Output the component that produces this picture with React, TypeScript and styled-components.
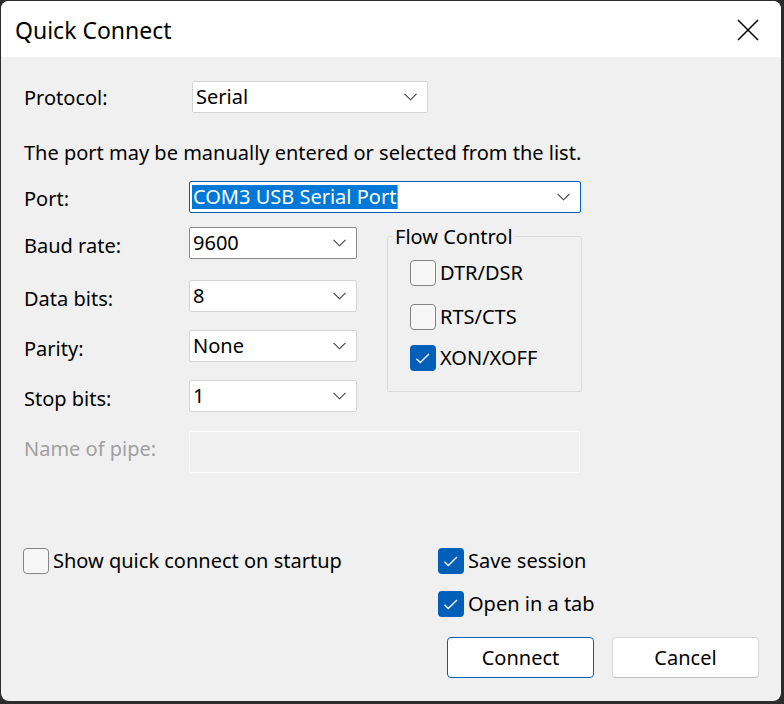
import React from "react";
import styled, { createGlobalStyle } from "styled-components";

const GlobalStyle = createGlobalStyle`
  html, body { margin: 0; padding: 0; background: #2c2c2c; }
  body {
    width: 784px; height: 704px; overflow: hidden;
    font-family: "Noto Sans", "Open Sans", sans-serif;
    color: #000;
  }
  * { box-sizing: border-box; }
`;

const Frame = styled.div`
  width: 784px;
  height: 704px;
  padding: 1px 3px 3px 1px;
  display: flex;
`;

const Window = styled.div`
  flex: 1;
  display: flex;
  flex-direction: column;
  background: #f0f0f0;
  border-radius: 8px;
  overflow: hidden;
`;

const TitleBar = styled.div`
  height: 56px;
  flex: none;
  background: #ffffff;
  display: flex;
  align-items: center;
  justify-content: space-between;
  padding: 1px 22px 0 14px;
`;

const Title = styled.div`
  font-size: 23px;
  line-height: 28px;
`;

const Body = styled.div`
  flex: 1;
  display: flex;
  flex-direction: column;
  padding: 0 22px 23px 22px;
`;

const Row = styled.div<{ $mt?: number }>`
  display: flex;
  align-items: center;
  margin-top: ${(p) => p.$mt ?? 0}px;
`;

const Label = styled.div<{ $w: number; $dy?: number; $disabled?: boolean }>`
  width: ${(p) => p.$w}px;
  flex: none;
  font-size: 20px;
  line-height: 28px;
  padding-left: 1px;
  position: relative;
  top: ${(p) => p.$dy ?? 0}px;
  color: ${(p) => (p.$disabled ? "#a0a0a0" : "#000")};
`;

const Combo = styled.div<{ $w: number; $border?: string }>`
  width: ${(p) => p.$w}px;
  height: 32px;
  flex: none;
  background: #ffffff;
  border: 1px solid ${(p) => p.$border ?? "#d4d4d4"};
  border-radius: 2px;
  display: flex;
  align-items: center;
  justify-content: space-between;
  padding: 0 10px 0 2px;
`;

const ComboText = styled.span<{ $selected?: boolean }>`
  font-size: 20px;
  line-height: 24px;
  padding: 0 1px;
  background: ${(p) => (p.$selected ? "#0078d7" : "transparent")};
  color: ${(p) => (p.$selected ? "#ffffff" : "#000")};
`;

const Caret = styled.span`
  width: 1px;
  height: 24px;
  background: #ff8000;
`;

const Spacer = styled.span`
  flex: 1;
`;

const Description = styled.div`
  margin-top: 26px;
  font-size: 20px;
  line-height: 28px;
  padding-left: 1px;
`;

const Middle = styled.div`
  display: flex;
  margin-top: 14px;
  gap: 30px;
`;

const LeftCol = styled.div`
  display: flex;
  flex-direction: column;
`;

const Group = styled.div`
  position: relative;
  width: 195px;
  height: 156px;
  margin-top: 9px;
  border: 1px solid #dcdcdc;
  border-radius: 2px;
  padding: 21px 0 0 22px;
  display: flex;
  flex-direction: column;
`;

const Legend = styled.span`
  position: absolute;
  top: -13px;
  left: 5px;
  padding: 0 2px;
  background: #f0f0f0;
  font-size: 20px;
  line-height: 26px;
`;

const PipeInput = styled.div`
  width: 391px;
  height: 42px;
  flex: none;
  border: 1px solid #fafafa;
  border-radius: 2px;
  background: #f0f0f0;
`;

const Bottom = styled.div`
  margin-top: auto;
  display: flex;
  flex-direction: column;
`;

const BottomChecks = styled.div`
  display: flex;
`;

const CheckCol = styled.div<{ $w?: number }>`
  width: ${(p) => (p.$w ? `${p.$w}px` : "auto")};
  display: flex;
  flex-direction: column;
  gap: 14px;
`;

const CheckItem = styled.div<{ $mt?: number }>`
  display: flex;
  align-items: center;
  gap: 4px;
  height: 29px;
  margin-top: ${(p) => p.$mt ?? 0}px;
`;

const Box = styled.div<{ $checked?: boolean }>`
  width: 26px;
  height: 26px;
  flex: none;
  border-radius: 4px;
  background: ${(p) => (p.$checked ? "#005fb8" : "#f6f6f6")};
  border: ${(p) => (p.$checked ? "none" : "1px solid #858585")};
  display: flex;
  align-items: center;
  justify-content: center;
`;

const CheckText = styled.span`
  font-size: 20px;
  line-height: 28px;
  padding-top: 1px;
`;

const ButtonRow = styled.div`
  display: flex;
  justify-content: flex-end;
  gap: 18px;
  margin-top: 19px;
`;

const Button = styled.button<{ $primary?: boolean }>`
  width: 147px;
  height: 41px;
  background: #ffffff;
  border: 1px solid ${(p) => (p.$primary ? "#005fb8" : "#d6d6d6")};
  border-bottom-color: ${(p) => (p.$primary ? "#005fb8" : "#c2c2c2")};
  border-radius: 4px;
  font-family: inherit;
  font-size: 20px;
  color: #000;
  padding: 0;
`;

const Chevron = () => (
  <svg width="13" height="8" viewBox="0 0 13 8">
    <path d="M0.5 0.8 L6.5 6.8 L12.5 0.8" fill="none" stroke="#404040" strokeWidth="1.1" />
  </svg>
);

const CloseIcon = () => (
  <svg width="22" height="22" viewBox="0 0 22 22">
    <path d="M1 1 L21 21 M21 1 L1 21" fill="none" stroke="#000" strokeWidth="1.5" />
  </svg>
);

const Tick = () => (
  <svg width="26" height="26" viewBox="0 0 26 26">
    <path d="M6.5 13.8 L10.3 17.6 L19 9" fill="none" stroke="#fff" strokeWidth="1.4" />
  </svg>
);

const Check = ({ checked, label, mt }: { checked?: boolean; label: string; mt?: number }) => (
  <CheckItem $mt={mt}>
    <Box $checked={checked}>{checked && <Tick />}</Box>
    <CheckText>{label}</CheckText>
  </CheckItem>
);

const Select = ({ w, value, border }: { w: number; value: string; border?: string }) => (
  <Combo $w={w} $border={border}>
    <ComboText>{value}</ComboText>
    <Chevron />
  </Combo>
);

export default function App() {
  return (
    <>
      <GlobalStyle />
      <Frame>
        <Window>
          <TitleBar>
            <Title>Quick Connect</Title>
            <CloseIcon />
          </TitleBar>
          <Body>
            <Row $mt={24}>
              <Label $w={169} $dy={1}>Protocol:</Label>
              <Select w={236} value="Serial" />
            </Row>
            <Description>The port may be manually entered or selected from the list.</Description>
            <Row $mt={14}>
              <Label $w={166} $dy={2}>Port:</Label>
              <Combo $w={392} $border="#005fb8">
                <ComboText $selected>COM3 USB Serial Port</ComboText>
                <Caret />
                <Spacer />
                <Chevron />
              </Combo>
            </Row>
            <Middle>
              <LeftCol>
                <Row>
                  <Label $w={166} $dy={3}>Baud rate:</Label>
                  <Select w={168} value="9600" border="#8a8a8a" />
                </Row>
                <Row $mt={21}>
                  <Label $w={166} $dy={3}>Data bits:</Label>
                  <Select w={168} value="8" />
                </Row>
                <Row $mt={18}>
                  <Label $w={166} $dy={3}>Parity:</Label>
                  <Select w={168} value="None" />
                </Row>
                <Row $mt={18}>
                  <Label $w={166} $dy={3}>Stop bits:</Label>
                  <Select w={168} value="1" />
                </Row>
              </LeftCol>
              <Group>
                <Legend>Flow Control</Legend>
                <Check label="DTR/DSR" />
                <Check label="RTS/CTS" mt={15} />
                <Check label="XON/XOFF" checked mt={12} />
              </Group>
            </Middle>
            <Row $mt={19}>
              <Label $w={166} $dy={-3} $disabled>Name of pipe:</Label>
              <PipeInput />
            </Row>
            <Bottom>
              <BottomChecks>
                <CheckCol $w={415}>
                  <Check label="Show quick connect on startup" />
                </CheckCol>
                <CheckCol>
                  <Check label="Save session" checked />
                  <Check label="Open in a tab" checked />
                </CheckCol>
              </BottomChecks>
              <ButtonRow>
                <Button $primary>Connect</Button>
                <Button>Cancel</Button>
              </ButtonRow>
            </Bottom>
          </Body>
        </Window>
      </Frame>
    </>
  );
}
